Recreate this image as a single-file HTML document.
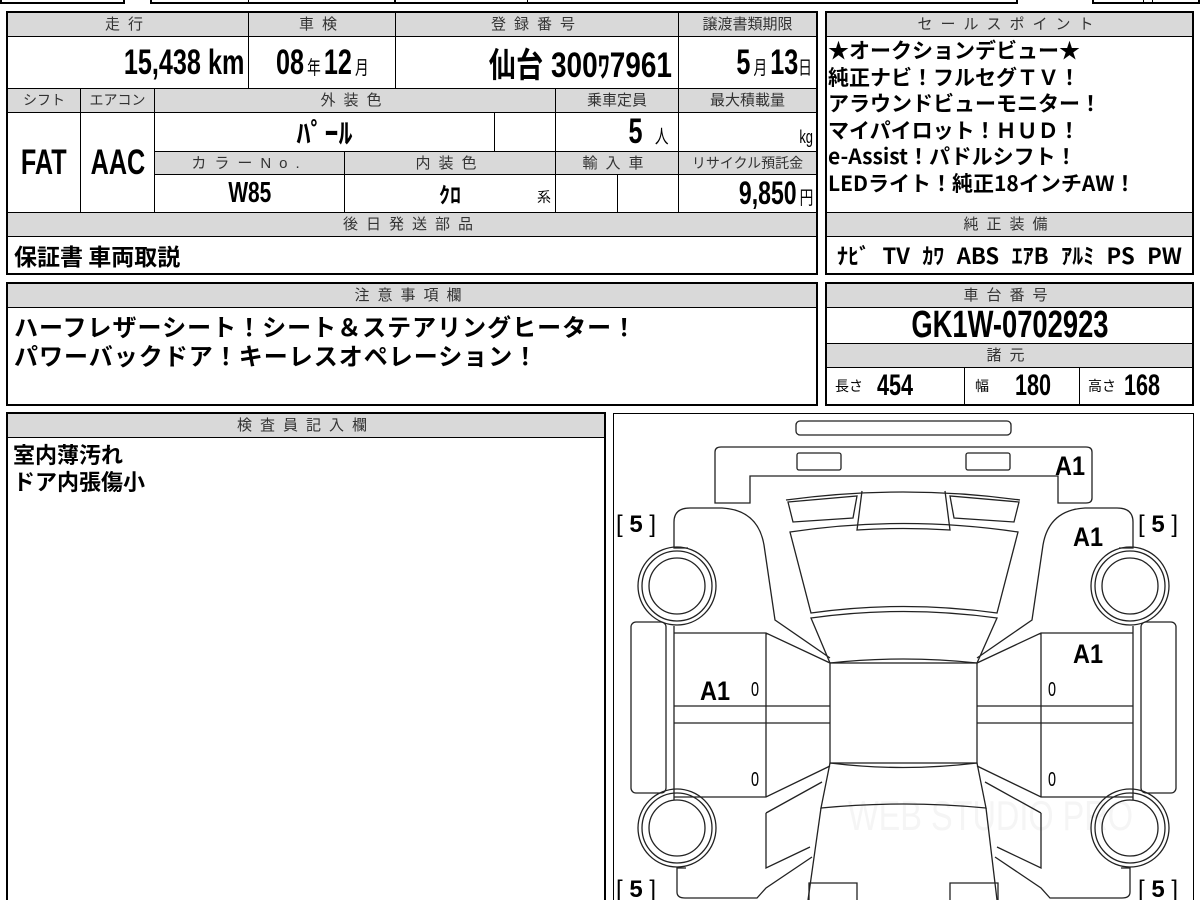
<!DOCTYPE html>
<html style="overflow:hidden;height:900px"><head><meta charset="utf-8"><style>
*{margin:0;padding:0;box-sizing:border-box}
body{width:1200px;height:900px;background:#fff;position:relative;overflow:hidden;font-family:"Liberation Sans","Noto Sans CJK JP",sans-serif;color:#000}
.c{position:absolute;border:1px solid #000;overflow:hidden;white-space:nowrap}
.h{background:#d9d9d9;color:#333;font-size:15px;text-align:center;letter-spacing:8px;line-height:23px}
.o{position:absolute;border:2px solid #000}
.n{font-weight:bold}
.j{font-family:"Noto Sans CJK JP",sans-serif;font-weight:bold}
.s{font-size:19px;font-weight:normal;font-family:"Noto Sans CJK JP",sans-serif}
.v{display:flex;align-items:center}
.k{display:inline-block;transform:scaleX(.72);white-space:nowrap}
.kr{transform-origin:right center}
.kl{transform-origin:left center}
</style></head><body>
<div class="c" style="left:0;top:-10px;width:125px;height:14px;border-width:2px"></div>
<div class="c" style="left:150px;top:-10px;width:868px;height:14px;border-width:2px"></div>
<div class="c" style="left:248px;top:-10px;width:147px;height:14px"></div>
<div class="c" style="left:395px;top:-10px;width:133px;height:14px"></div>
<div class="c" style="left:1092px;top:-10px;width:108px;height:14px;border-width:2px"></div>
<div class="c" style="left:1143px;top:-10px;width:10px;height:14px"></div>

<div class="c h" style="left:7px;top:12px;width:242px;height:25px">走行</div>
<div class="c h" style="left:248px;top:12px;width:148px;height:25px">車検</div>
<div class="c h" style="left:395px;top:12px;width:284px;height:25px">登録番号</div>
<div class="c h" style="left:678px;top:12px;width:139px;height:25px;letter-spacing:0">譲渡書類期限</div>
<div class="c n v" style="left:7px;top:36px;width:242px;height:53px;justify-content:flex-end;padding-right:4px;font-size:35px"><span class="k kr">15,438 km</span></div>
<div class="c n v" style="left:248px;top:36px;width:148px;height:53px;justify-content:center;font-size:35px"><span class="k">08<span class="s">&nbsp;年&nbsp;</span>12<span class="s">&nbsp;月</span></span></div>
<div class="c n v" style="left:395px;top:36px;width:284px;height:53px;justify-content:flex-end;padding-right:6px;font-size:35px"><span class="k kr" style="transform:scaleX(.8)"><span class="j" style="font-size:34px">仙台</span>&nbsp;300<span class="j" style="font-size:30px">ﾜ</span>7961</span></div>
<div class="c n v" style="left:678px;top:36px;width:139px;height:53px;justify-content:flex-end;padding-right:4px;font-size:35px"><span class="k kr">5<span class="s">&nbsp;月&nbsp;</span>13<span class="s">日</span></span></div>

<div class="c h" style="left:7px;top:88px;width:74px;height:25px;letter-spacing:0;font-size:14px">シフト</div>
<div class="c h" style="left:80px;top:88px;width:75px;height:25px;letter-spacing:0;font-size:14px">エアコン</div>
<div class="c h" style="left:154px;top:88px;width:402px;height:25px">外装色</div>
<div class="c h" style="left:555px;top:88px;width:124px;height:25px;letter-spacing:0">乗車定員</div>
<div class="c h" style="left:678px;top:88px;width:139px;height:25px;letter-spacing:0">最大積載量</div>

<div class="c n v" style="left:7px;top:112px;width:74px;height:101px;justify-content:center;font-size:35px"><span class="k">FAT</span></div>
<div class="c n v" style="left:80px;top:112px;width:75px;height:101px;justify-content:center;font-size:35px"><span class="k">AAC</span></div>
<div class="c j v" style="left:154px;top:112px;width:341px;height:40px;justify-content:center;font-size:28px">ﾊﾟｰﾙ</div>
<div class="c" style="left:494px;top:112px;width:62px;height:40px"></div>
<div class="c n v" style="left:555px;top:112px;width:124px;height:40px;justify-content:flex-end;padding-right:10px;font-size:35px"><span class="k kr">5<span class="s">&nbsp;&nbsp;&nbsp;&nbsp;人</span></span></div>
<div class="c v" style="left:678px;top:112px;width:139px;height:40px;justify-content:flex-end;padding-right:3px;font-size:18px;padding-top:10px"><span class="k kr">kg</span></div>

<div class="c h" style="left:154px;top:151px;width:191px;height:24px">カラーNo.</div>
<div class="c h" style="left:344px;top:151px;width:212px;height:24px">内装色</div>
<div class="c h" style="left:555px;top:151px;width:124px;height:24px">輸入車</div>
<div class="c h" style="left:678px;top:151px;width:139px;height:24px;letter-spacing:0;font-size:14px">リサイクル預託金</div>
<div class="c n v" style="left:154px;top:174px;width:191px;height:39px;justify-content:center;font-size:29px"><span class="k">W85</span></div>
<div class="c j v" style="left:344px;top:174px;width:212px;height:39px;justify-content:center;font-size:22px">ｸﾛ<span class="s" style="position:absolute;right:4px;top:12px;font-size:14px">系</span></div>
<div class="c" style="left:555px;top:174px;width:63px;height:39px"></div>
<div class="c" style="left:617px;top:174px;width:62px;height:39px"></div>
<div class="c n v" style="left:678px;top:174px;width:139px;height:39px;justify-content:flex-end;padding-right:3px;font-size:32px"><span class="k kr">9,850<span class="s">&nbsp;円</span></span></div>

<div class="c h" style="left:7px;top:212px;width:810px;height:25px">後日発送部品</div>
<div class="c j v" style="left:7px;top:236px;width:810px;height:38px;padding-left:6px;font-size:23px">保証書 車両取説</div>
<div class="o" style="left:6px;top:11px;width:812px;height:264px"></div>

<div class="c h" style="left:826px;top:12px;width:367px;height:25px">セールスポイント</div>
<div class="c j" style="left:826px;top:36px;width:367px;height:177px;font-size:21px;line-height:26.6px;padding:0 0 0 1px">★オークションデビュー★<br>純正ナビ！フルセグＴＶ！<br>アラウンドビューモニター！<br>マイパイロット！ＨＵＤ！<br>e-Assist！パドルシフト！<br>LEDライト！純正18インチAW！</div>
<div class="c h" style="left:826px;top:212px;width:367px;height:25px">純正装備</div>
<div class="c j v" style="left:826px;top:236px;width:367px;height:38px;justify-content:space-between;padding:0 10px;font-size:22px"><span>ﾅﾋﾞ</span><span>TV</span><span>ｶﾜ</span><span>ABS</span><span>ｴｱB</span><span>ｱﾙﾐ</span><span>PS</span><span>PW</span></div>
<div class="o" style="left:825px;top:11px;width:369px;height:264px"></div>

<div class="c h" style="left:7px;top:283px;width:810px;height:25px">注意事項欄</div>
<div class="c j" style="left:7px;top:307px;width:810px;height:98px;padding:3px 0 0 6px;font-size:24px;line-height:29px;letter-spacing:1px">ハーフレザーシート！シート＆ステアリングヒーター！<br>パワーバックドア！キーレスオペレーション！</div>
<div class="o" style="left:6px;top:282px;width:812px;height:124px"></div>

<div class="c h" style="left:826px;top:283px;width:367px;height:25px">車台番号</div>
<div class="c n v" style="left:826px;top:307px;width:367px;height:37px;justify-content:center;font-size:38px"><span class="k">GK1W-0702923</span></div>
<div class="c h" style="left:826px;top:343px;width:367px;height:25px">諸元</div>
<div class="c n v" style="left:826px;top:367px;width:139px;height:38px;padding-left:8px;font-size:30px"><span class="s" style="font-size:14px">長さ</span><span class="k kl" style="margin-left:14px">454</span></div>
<div class="c n v" style="left:964px;top:367px;width:116px;height:38px;padding-left:10px;font-size:30px"><span class="s" style="font-size:14px">幅</span><span class="k kl" style="margin-left:26px">180</span></div>
<div class="c n v" style="left:1079px;top:367px;width:114px;height:38px;padding-left:8px;font-size:30px"><span class="s" style="font-size:14px">高さ</span><span class="k kl" style="margin-left:8px">168</span></div>
<div class="o" style="left:825px;top:282px;width:369px;height:124px"></div>

<div class="c h" style="left:7px;top:413px;width:598px;height:25px">検査員記入欄</div>
<div class="c j" style="left:7px;top:437px;width:598px;height:470px;padding:3px 0 0 5px;font-size:22px;line-height:27px">室内薄汚れ<br>ドア内張傷小</div>
<div class="o" style="left:6px;top:412px;width:600px;height:496px"></div>

<div class="o" style="left:613px;top:413px;width:581px;height:496px;border-width:1.5px"></div>

<svg width="1200" height="900" style="position:absolute;left:0;top:0" viewBox="0 0 1200 900">
<text x="848" y="830" font-family="Liberation Sans" font-size="42" fill="#f5f5f5" textLength="285" lengthAdjust="spacingAndGlyphs">WEB STUDIO PRO</text>
<g fill="none" stroke="#222" stroke-width="1.3">
<rect x="796" y="421" width="215" height="14" rx="4"/>
<path d="M715,503 L715,452 Q715,447 721,447 L1086,447 Q1092,447 1092,452 L1092,498 Q1092,503 1086,503 L1058,503 L1058,476 L750,476 L750,503 Z"/>
<rect x="797" y="453" width="44" height="17" rx="2"/>
<rect x="966" y="453" width="44" height="17" rx="2"/>
<path d="M790,532 Q903,515 1018,532 L997,613 Q903,600 811,613 Z"/>
<path d="M811,618 Q903,605 997,618 L977,663 Q903,655 830,663 Z"/>
<rect x="830" y="663" width="147" height="100"/>
<path d="M830,763 Q903,772 977,763 L986,808 Q903,800 821,808 Z"/>
<path d="M821,808 L808,900 M986,808 L997,900"/>
<path d="M786,500 Q903,484 1020,500"/>
<path d="M862,491 L857,530 Q903,527 950,530 L945,491"/>
<g id="L">
<path d="M788,502 L857,496 L853,518 L793,522 Z"/>
<path d="M688,548 L674,548 L674,522 Q674,508 690,508 L722,508 Q758,510 764,545 L775,620 L830,658"/>
<circle cx="677" cy="586" r="39"/><circle cx="677" cy="586" r="35"/><circle cx="677" cy="586" r="28"/>
<circle cx="677" cy="828" r="39"/><circle cx="677" cy="828" r="35"/><circle cx="677" cy="828" r="28"/>
<rect x="631" y="622" width="35" height="171" rx="5"/>
<path d="M674,626 L674,800"/>
<path d="M674,633 L766,633 L830,663 M766,633 L766,797 M674,797 L766,797 L830,766"/>
<path d="M674,706 L830,706 M674,723 L830,723"/>
<path d="M766,813 L822,782 M766,813 L766,868 L810,847"/>
<path d="M686,868 L677,868 L677,892 Q677,898 685,898 L757,898 L766,888 L812,857"/>
<path d="M809,900 L809,883 L857,883 L857,900"/>
</g>
<use href="#L" transform="translate(1807,0) scale(-1,1)"/>
</g>
<g font-family="Liberation Sans, sans-serif" font-weight="bold" font-size="27" fill="#000">
<text x="1055" y="475" textLength="30" lengthAdjust="spacingAndGlyphs">A1</text>
<text x="1073" y="546" textLength="30" lengthAdjust="spacingAndGlyphs">A1</text>
<text x="1073" y="663" textLength="30" lengthAdjust="spacingAndGlyphs">A1</text>
<text x="700" y="700" textLength="30" lengthAdjust="spacingAndGlyphs">A1</text>
</g>
<g font-family="Liberation Sans, sans-serif" font-size="20" fill="#000">
<text x="751" y="696" textLength="8" lengthAdjust="spacingAndGlyphs">0</text><text x="1048" y="696" textLength="8" lengthAdjust="spacingAndGlyphs">0</text>
<text x="751" y="786" textLength="8" lengthAdjust="spacingAndGlyphs">0</text><text x="1048" y="786" textLength="8" lengthAdjust="spacingAndGlyphs">0</text>
</g>
<g font-family="Liberation Sans, sans-serif" font-size="24" fill="#000">
<text x="616" y="532">[ <tspan font-weight="bold">5</tspan> ]</text>
<text x="1138" y="532">[ <tspan font-weight="bold">5</tspan> ]</text>
<text x="616" y="897">[ <tspan font-weight="bold">5</tspan> ]</text>
<text x="1138" y="897">[ <tspan font-weight="bold">5</tspan> ]</text>
</g>
</svg>
</body></html>
